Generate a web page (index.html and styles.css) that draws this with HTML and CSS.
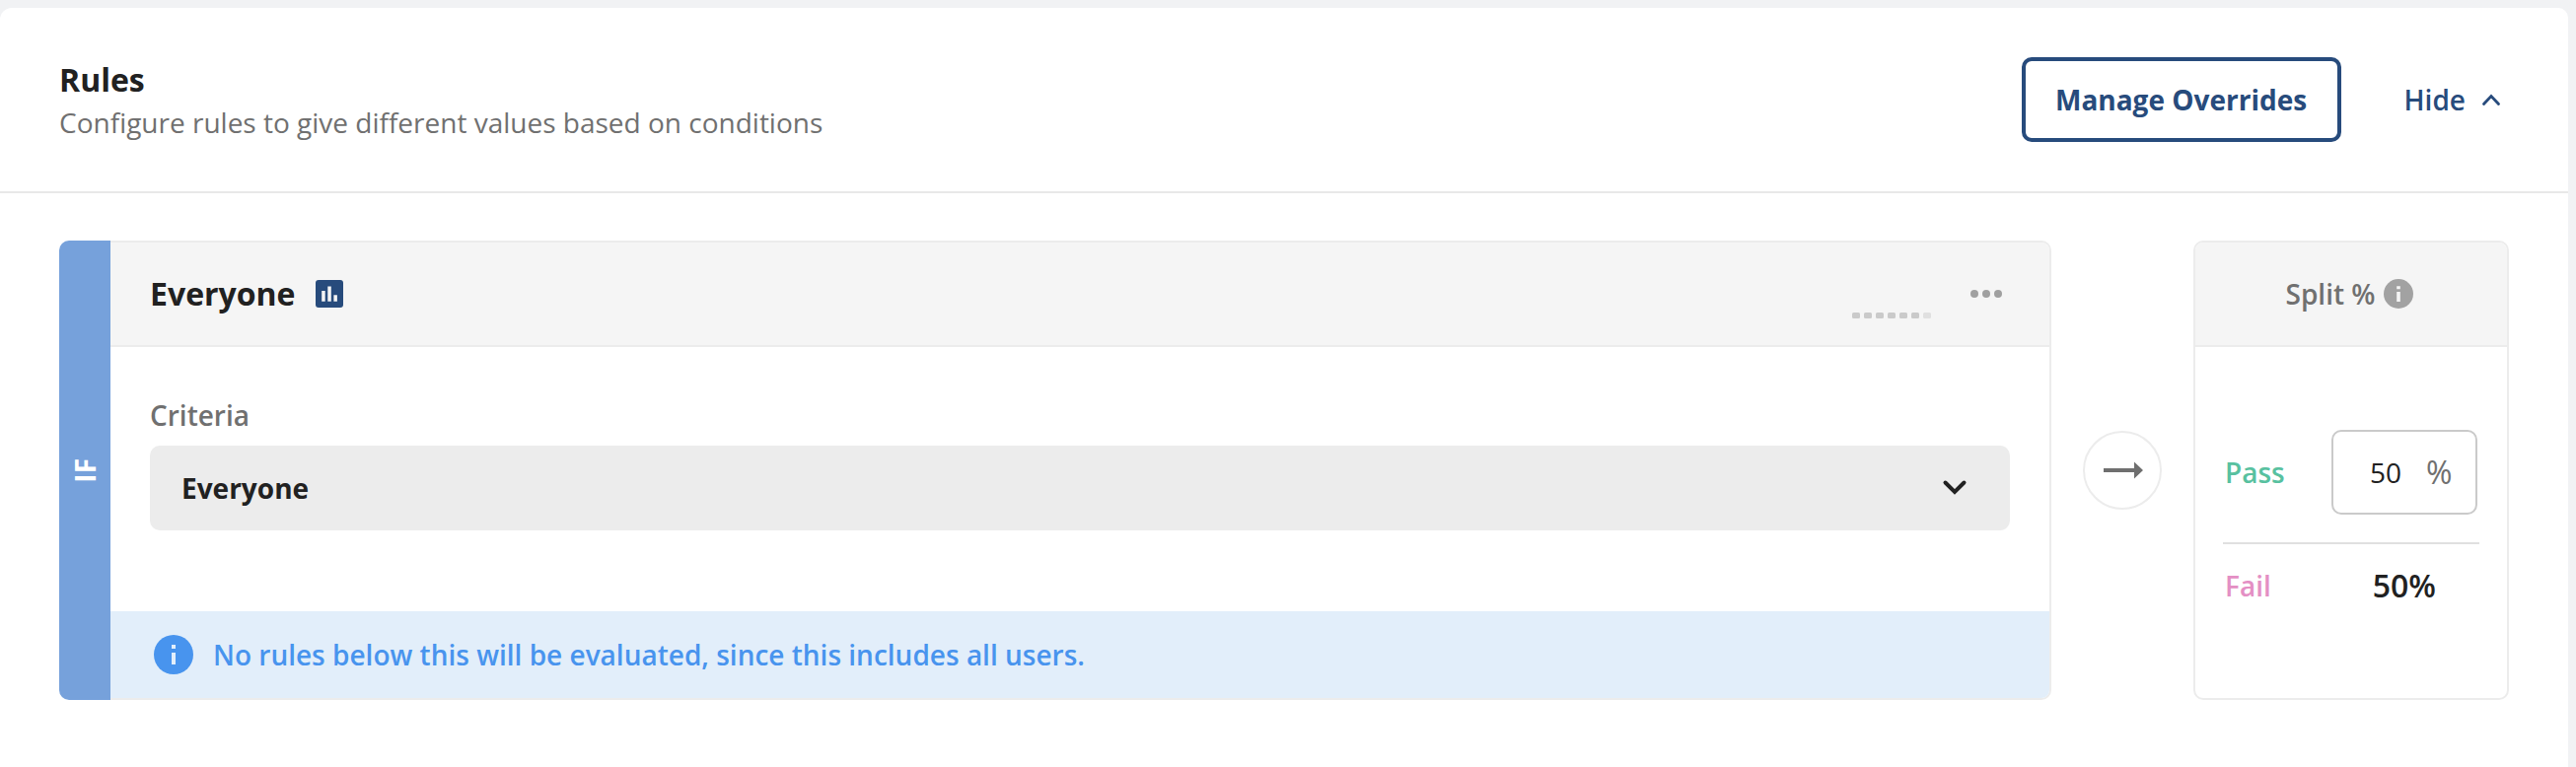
FILE: index.html
```html
<!DOCTYPE html>
<html lang="en">
<head>
<meta charset="utf-8">
<title>Rules</title>
<link rel="stylesheet" href="styles.css">
</head>
<body>
<main class="panel">
  <header class="panel-header">
    <div class="heading">
      <h1 class="title">Rules</h1>
      <p class="subtitle">Configure rules to give different values based on conditions</p>
    </div>
    <div class="actions">
      <button class="manage">Manage Overrides</button>
      <a class="hide"><span>Hide</span>
        <svg width="20" height="14" viewBox="0 0 20 14"><path d="M2.500 11.500 10 3.500l7.500 8" fill="none" stroke="#274b7c" stroke-width="2.800" stroke-linecap="round"/></svg>
      </a>
    </div>
  </header>
  <div class="row">
    <section class="rule">
      <div class="strip"><span>IF</span></div>
      <div class="rule-main">
        <div class="rule-header">
          <h2 class="rule-name">Everyone</h2>
          <svg class="chart" width="28" height="28" viewBox="0 0 28 28"><rect width="28" height="28" rx="3" fill="#274b7c"/><path d="M6.200 11h3.500v10.800H6.200zM12.300 6.500h3.500v15.300h-3.500zM18.400 15.300h3.500v6.500h-3.500z" fill="#f5f5f5"/></svg>
          <svg class="spark" width="80" height="6" viewBox="0 0 80 6"><g fill="#cacaca"><rect width="8" height="6" rx="1.500"/><rect x="12" width="8" height="6" rx="1.500"/><rect x="24" width="8" height="6" rx="1.500"/><rect x="36" width="8" height="6" rx="1.500"/><rect x="48" width="8" height="6" rx="1.500"/><rect x="60" width="8" height="6" rx="1.500"/></g><rect x="72" width="8" height="6" rx="1.500" fill="#e0e0e0"/></svg>
          <svg class="more" width="32" height="8" viewBox="0 0 32 8"><g fill="#a0a0a0"><circle cx="4" cy="4" r="4"/><circle cx="16" cy="4" r="4"/><circle cx="28" cy="4" r="4"/></g></svg>
        </div>
        <div class="rule-body">
          <div class="label">Criteria</div>
          <div class="select"><span>Everyone</span>
            <svg width="26" height="18" viewBox="0 0 26 18"><path d="M3.500 3.500 13 13 22.500 3.500" fill="none" stroke="#212121" stroke-width="4" stroke-linecap="round"/></svg>
          </div>
        </div>
        <div class="notice">
          <svg width="40" height="40" viewBox="0 0 40 40"><circle cx="20" cy="20" r="20" fill="#4894ee"/><path d="M18 10h4v4h-4zM18 18h4v12h-4z" fill="#e3effb"/></svg>
          <span>No rules below this will be evaluated, since this includes all users.</span>
        </div>
      </div>
    </section>
    <div class="arrow">
      <svg width="40" height="18" viewBox="0 0 40 18"><path d="M0 7h31V.5L40 9l-9 8.500V11H0z" fill="#6f6f6f"/></svg>
    </div>
    <section class="split">
      <div class="split-header"><span>Split %</span>
        <svg width="30" height="30" viewBox="0 0 30 30"><circle cx="15" cy="15" r="15" fill="#a2a2a2"/><path d="M13.200 7.300h3.600v3h-3.600zM13.200 13h3.600v10h-3.600z" fill="#f5f5f5"/></svg>
      </div>
      <div class="split-body">
        <div class="pass-row"><span class="pass">Pass</span>
          <div class="input"><span class="num">50</span><span class="pct">%</span></div>
        </div>
        <div class="fail-row"><span class="fail">Fail</span><span class="fail-value">50%</span></div>
      </div>
    </section>
  </div>
</main>
</body>
</html>
```
FILE: styles.css
```css
* { box-sizing: border-box; }
body {
  margin: 0;
  padding: 8px 8px 0 0;
  height: 778px;
  overflow: hidden;
  background: #f1f2f4;
  font-family: "Open Sans", sans-serif;
  font-size: 28px;
  color: #212121;
}
svg { display: block; flex: none; }
h1, h2, p { margin: 0; }
.panel { height: 800px; background: #fff; border-radius: 12px 10px 0 0; }
.panel-header {
  height: 188px;
  border-bottom: 2px solid #e8e8e8;
  padding: 50px 68px 0 60px;
  display: flex;
  justify-content: space-between;
}
.heading { padding-top: 1px; }
.title { font-size: 32px; line-height: 44px; font-weight: 700; }
.subtitle { line-height: 42px; color: #707070; }
.actions { display: flex; gap: 64px; height: 86px; align-items: center; color: #274b7c; }
.manage {
  width: 324px;
  height: 86px;
  padding: 0;
  border: 4px solid #274b7c;
  border-radius: 10px;
  background: #fff;
  color: #274b7c;
  font: 700 28px/40px "Open Sans", sans-serif;
}
.hide { display: flex; align-items: center; gap: 16px; font-weight: 600; }
.row { display: flex; padding: 48px 60px 0; height: 514px; }
.rule { width: 2020px; display: flex; }
.strip {
  width: 52px;
  background: #76a1db;
  border-radius: 10px 0 0 10px;
  display: flex;
  align-items: center;
  justify-content: center;
}
.strip span {
  writing-mode: vertical-rl;
  transform: rotate(180deg);
  color: #fff;
  font-weight: 700;
  line-height: 40px;
}
.rule-main {
  flex: 1;
  border: 2px solid #ececec;
  border-left: 0;
  border-radius: 0 10px 10px 0;
  display: flex;
  flex-direction: column;
  overflow: hidden;
}
.rule-header {
  height: 106px;
  flex: none;
  background: #f5f5f5;
  border-bottom: 2px solid #ececec;
  padding: 0 48px 0 40px;
  display: flex;
  align-items: center;
}
.rule-name { font-size: 32px; line-height: 44px; font-weight: 700; }
.chart { margin-left: 20px; }
.spark { margin: 44px 40px 0 auto; }
.rule-body { flex: 1; padding: 49px 40px 0; }
.label { line-height: 40px; font-weight: 600; color: #707070; }
.select {
  height: 86px;
  margin-top: 11px;
  padding: 0 43px 0 32px;
  background: #ececec;
  border-radius: 10px;
  font-weight: 700;
  display: flex;
  align-items: center;
  justify-content: space-between;
}
.notice {
  height: 88px;
  background: #e2eefa;
  color: #4894ee;
  font-weight: 600;
  padding-left: 44px;
  display: flex;
  align-items: center;
  gap: 20px;
}
.arrow {
  width: 80px;
  height: 80px;
  margin: 193px 32px 0;
  border: 2px solid #ececec;
  border-radius: 50%;
  display: flex;
  align-items: center;
  justify-content: center;
}
.arrow svg { margin-left: 2px; }
.split { width: 320px; border: 2px solid #ececec; border-radius: 10px; overflow: hidden; }
.split-header {
  height: 106px;
  background: #f5f5f5;
  border-bottom: 2px solid #ececec;
  padding-right: 3px;
  display: flex;
  align-items: center;
  justify-content: center;
  gap: 9px;
  font-weight: 600;
  color: #707070;
}
.split-body { padding: 84px 28px 0; }
.pass-row {
  height: 116px;
  border-bottom: 2px solid #e0e0e0;
  padding: 0 2px;
  display: flex;
  justify-content: space-between;
}
.pass { line-height: 86px; color: #58c1a0; font-weight: 600; }
.input {
  width: 148px;
  height: 86px;
  border: 2px solid #cacaca;
  border-radius: 10px;
  display: flex;
  align-items: center;
  padding-left: 37px;
  line-height: 40px;
}
.pct { margin-left: 25px; font-size: 32px; color: #707070; }
.fail-row { height: 84px; padding: 0 44px 0 2px; display: flex; justify-content: space-between; line-height: 84px; }
.fail { color: #e48fc4; font-weight: 600; }
.fail-value { font-size: 32px; font-weight: 600; }
```
